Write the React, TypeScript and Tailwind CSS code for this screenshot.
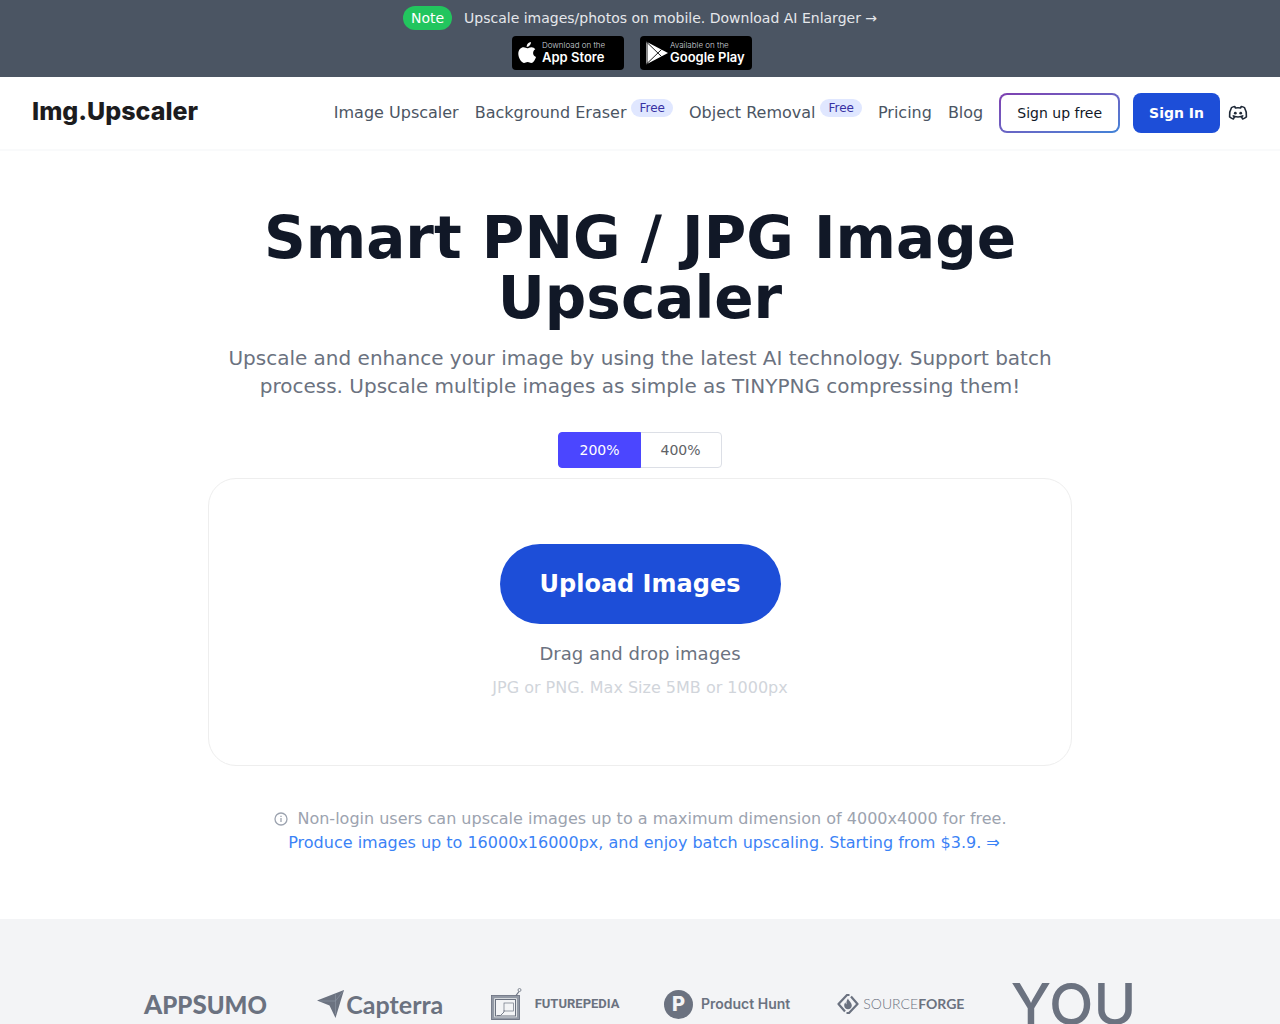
import React, { useState } from 'react';

interface NavItem {
  label: string;
  href: string;
  free?: boolean;
}

const navItems: NavItem[] = [
  { label: 'Image Upscaler', href: '#upscaler' },
  { label: 'Background Eraser', href: '#eraser', free: true },
  { label: 'Object Removal', href: '#removal', free: true },
  { label: 'Pricing', href: '#pricing' },
  { label: 'Blog', href: '#blog' },
];

const scales = ['200%', '400%'];

function AppleIcon() {
  return (
    <svg viewBox="0 0 18 22" className="w-[18px] h-[22px] shrink-0" fill="#fff" aria-hidden="true">
      <path d="M12.9 0c.2 2.5-1.8 4.8-4.2 4.9C8.4 2.5 10.7.2 12.9 0z" />
      <path d="M9.3 6.3c.9 0 2.3-1.1 4.1-1.1 1.7 0 3 .8 3.9 2-3.2 1.9-2.8 6.3.7 7.7-.8 2.6-2.6 6-4.7 6-1.4 0-2-.8-3.6-.8-1.7 0-2.3.8-3.6.8C3.7 20.9.3 15.9.3 11.7c0-4.2 2.7-6.4 5.3-6.4 1.6 0 2.8 1 3.7 1z" />
    </svg>
  );
}

function PlayIcon() {
  return (
    <svg viewBox="0 0 22 24" className="w-[22px] h-6 shrink-0" aria-hidden="true">
      <path d="M0 .5v23L22 12z" fill="#fff" />
      <path d="M0 .5l15.5 15M0 23.5l15.5-15M1 1v22" fill="none" stroke="#000" strokeWidth="0.9" />
    </svg>
  );
}

function DiscordIcon() {
  return (
    <svg viewBox="0 0 20 20" className="w-5 h-5" fill="none" stroke="#1f2937" strokeWidth="1.6" strokeLinecap="round" strokeLinejoin="round" aria-hidden="true">
      <circle cx="7.3" cy="10.2" r="1.4" fill="#1f2937" stroke="none" />
      <circle cx="12.7" cy="10.2" r="1.4" fill="#1f2937" stroke="none" />
      <path d="M7.5 5c1.700-.3 3.300-.3 5 0l.8-1.500c1.300.2 2.300.6 3.200 1.100 1.600 2.700 2.300 5.900 1.900 9.300-1.100.9-2.300 1.600-3.700 2.100l-1.300-2.400c-2.300.6-4.500.6-6.800 0L5.300 16c-1.400-.5-2.600-1.200-3.700-2.100-.4-3.400.3-6.600 1.900-9.300.9-.5 1.900-.9 3.200-1.100z" />
      <path d="M5.200 12.900c.5.3 1 .5 1.600.7M14.800 12.900c-.5.3-1 .5-1.600.7" />
    </svg>
  );
}

function InfoIcon() {
  return (
    <svg viewBox="0 0 16 16" className="w-4 h-4" fill="none" stroke="#9ca3af" strokeWidth="1.3" aria-hidden="true">
      <circle cx="8" cy="8" r="6" />
      <path d="M8 7v4M8 4.7v1.4" />
    </svg>
  );
}

function CapterraIcon() {
  return (
    <svg viewBox="0 0 27 28" className="w-[27px] h-7 shrink-0" aria-hidden="true">
      <path d="M0 10.5L27 0l-8.5 28-6-12.500z" fill="#6b7280" />
      <path d="M3 11h15.500M18.500 4.500V24M18.500 11L27 0" fill="none" stroke="#8f97a4" strokeWidth="0.6" />
    </svg>
  );
}

function FuturepediaIcon() {
  return (
    <svg viewBox="0 0 32 32" className="w-8 h-8 shrink-0" fill="none" stroke="#6b7280" aria-hidden="true">
      <rect x="1.8" y="8.8" width="25.5" height="22" stroke="#9299a5" strokeWidth="3" />
      <rect x="0.5" y="7.5" width="28" height="24" strokeWidth="0.8" />
      <rect x="4.5" y="11.5" width="20" height="16.5" strokeWidth="1" />
      <rect x="13" y="15" width="9.5" height="8" strokeWidth="0.7" />
      <path d="M13 22.5V24l-3.5 3.5H6" strokeWidth="0.9" />
      <path d="M25 7.5l3-4" strokeWidth="1.2" />
      <circle cx="28.5" cy="2" r="1.5" strokeWidth="0.8" />
    </svg>
  );
}

function SourceForgeIcon() {
  return (
    <svg viewBox="0 0 22 20" className="w-[22px] h-5 shrink-0" aria-hidden="true">
      <g fill="none" stroke="#6b7280" strokeWidth="2.2" strokeLinejoin="round">
        <path d="M12.500 1L10 1 1.500 10l6.500 7.500" />
        <path d="M14 2.500l6.500 7.500L12 19H9.500" />
      </g>
      <path d="M11 4.500c.8 2.500 3.800 4 3.800 7 0 2.200-1.700 3.700-3.800 3.700s-3.800-1.500-3.800-3.700c0-1.300.5-2.300 1.200-3.200.1 1 .5 1.700 1.100 1.900-.3-2.200.3-4.200 1.500-5.700z" fill="#6b7280" />
    </svg>
  );
}

function FreeBadge() {
  return (
    <span className="ml-[5px] mb-2.5 px-2 rounded-full bg-[#e0e7ff] text-[#3730a3] text-xs leading-[18px]">
      Free
    </span>
  );
}

export default function App() {
  const [scale, setScale] = useState('200%');

  return (
    <div className="min-h-screen bg-white font-['DejaVu_Sans',sans-serif] text-base">
      <div className="bg-[#4b5563] pt-1.5 pb-[7px] flex flex-col items-center gap-1.5">
        <a href="#mobile" className="flex items-center gap-3 text-sm text-[#e5e7eb]">
          <span className="rounded-full bg-[#22c55e] text-white px-2 leading-6">Note</span>
          <span>Upscale images/photos on mobile. Download AI Enlarger →</span>
        </a>
        <div className="flex gap-4 pr-4">
          <a href="#app-store" className="w-28 h-[34px] rounded bg-black text-white flex items-center gap-1.5 pl-1.5">
            <AppleIcon />
            <span className="flex flex-col whitespace-nowrap pb-0.5">
              <span className="font-['Inter',sans-serif] font-light text-[8px] leading-[10px] text-[#d1d5db]">Download on the</span>
              <span className="font-['Inter',sans-serif] font-semibold text-[13px] leading-[14px]">App Store</span>
            </span>
          </a>
          <a href="#google-play" className="w-28 h-[34px] rounded bg-black text-white flex items-center gap-0.5 pl-1.5">
            <PlayIcon />
            <span className="flex flex-col whitespace-nowrap pb-0.5">
              <span className="font-['Inter',sans-serif] font-light text-[8px] leading-[10px] text-[#d1d5db]">Available on the</span>
              <span className="font-['Inter',sans-serif] font-semibold text-[13px] leading-[14px]">Google Play</span>
            </span>
          </a>
        </div>
      </div>

      <header className="border-b-2 border-[#f9fafb] px-8 py-4 flex items-center justify-between">
        <a href="#home" className="font-['Inter',sans-serif] font-extrabold text-[25px] leading-8 text-[#1c1c1e] pb-1">
          Img.Upscaler
        </a>
        <div className="flex items-center whitespace-nowrap">
          <nav className="flex items-center gap-4 mr-4">
            {navItems.map((item) => (
              <a key={item.label} href={item.href} className="flex items-center text-[#4b5563]">
                {item.label}
                {item.free && <FreeBadge />}
              </a>
            ))}
          </nav>
          <button type="button" className="rounded-lg bg-linear-to-br from-[#7e3fb0] to-[#3f83d8] p-0.5 mr-[13px]">
            <span className="block rounded-md bg-white px-4 text-sm leading-9 text-[#111827]">Sign up free</span>
          </button>
          <button type="button" className="rounded-lg bg-[#1d4ed8] px-4 text-sm leading-10 font-bold text-white mr-2">
            Sign In
          </button>
          <a href="#discord" aria-label="Discord">
            <DiscordIcon />
          </a>
        </div>
      </header>

      <main className="max-w-4xl mx-auto px-4 pt-[57px] pb-16 text-center">
        <h1 className="text-[58px] leading-[60px] font-bold text-[#111827]">
          Smart PNG / JPG Image Upscaler
        </h1>
        <p className="mt-4 text-xl leading-7 text-[#6b7280]">
          Upscale and enhance your image by using the latest AI technology. Support batch process. Upscale multiple images as simple as TINYPNG compressing them!
        </p>

        <div className="mt-8 flex justify-center">
          {scales.map((value) => (
            <button
              key={value}
              type="button"
              onClick={() => setScale(value)}
              className={`border px-5 py-2 text-sm leading-[18px] -ml-px first:ml-0 first:rounded-l last:rounded-r ${
                scale === value
                  ? 'relative bg-[#4b46ff] border-[#4b46ff] text-white'
                  : 'bg-white border-[#dcdfe6] text-[#606266]'
              }`}
            >
              {value}
            </button>
          ))}
        </div>

        <div className="mt-2.5 border border-[#eeeeee] rounded-[28px] pt-[65px] pb-[63px] flex flex-col items-center">
          <button type="button" className="rounded-full bg-[#1d4ed8] px-10 py-6 text-2xl leading-8 font-bold text-white">
            Upload Images
          </button>
          <p className="mt-4 text-lg leading-7 text-[#6b7280]">Drag and drop images</p>
          <p className="mt-1.5 text-base leading-7 text-[#d1d5db]">JPG or PNG. Max Size 5MB or 1000px</p>
        </div>

        <div className="mt-[41px] leading-6">
          <p className="flex items-center justify-center gap-2 text-[#9ca3af]">
            <InfoIcon />
            Non-login users can upscale images up to a maximum dimension of 4000x4000 for free.
          </p>
          <a href="#pricing" className="block pl-2 text-[#3b82f6]">
            Produce images up to 16000x16000px, and enjoy batch upscaling. Starting from $3.9. ⇒
          </a>
        </div>
      </main>

      <section className="bg-[#f3f4f6] py-16">
        <div className="max-w-5xl mx-auto px-4 grid grid-cols-6 gap-12 items-center text-[#6b7280] whitespace-nowrap">
          <div className="font-['Lato',sans-serif] font-black leading-8 text-[26px]">
            A<span className="text-2xl leading-8">PP</span>S<span className="text-2xl leading-8">UMO</span>
          </div>
          <div className="flex items-center gap-0.5 font-['Lato',sans-serif] font-bold text-[25px] leading-8">
            <CapterraIcon />
            Capterra
          </div>
          <div className="flex items-center gap-3 font-['Liberation_Sans_Narrow',Roboto,sans-serif] font-bold text-[13px] leading-8">
            <FuturepediaIcon />
            FUTUREPEDIA
          </div>
          <div className="flex items-center gap-2 font-['Inter',sans-serif] font-semibold text-sm">
            <span className="w-[29px] h-[29px] rounded-full bg-[#6b7280] text-[#f3f4f6] flex items-center justify-center text-xl font-extrabold shrink-0">P</span>
            Product Hunt
          </div>
          <div className="flex items-center gap-1 font-['Lato',sans-serif] text-sm">
            <SourceForgeIcon />
            <span><span className="font-light">SOURCE</span><span className="font-bold">FORGE</span></span>
          </div>
          <div className="font-['Inter',sans-serif] font-medium text-[58px] leading-[42px]">YOU</div>
        </div>
      </section>
    </div>
  );
}
